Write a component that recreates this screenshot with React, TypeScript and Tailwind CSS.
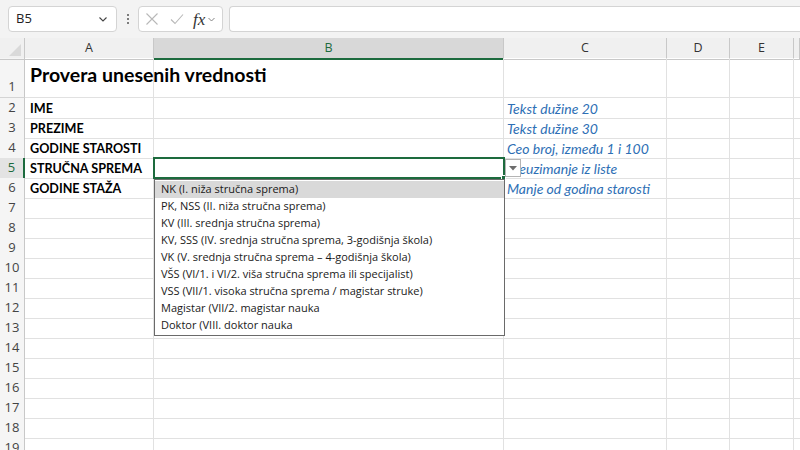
import React from "react";

const GRID = "grid grid-cols-[25px_129px_350px_163px_63px_64px_1fr]";

const labels: Record<number, string> = {
  2: "IME",
  3: "PREZIME",
  4: "GODINE STAROSTI",
  5: "STRUČNA SPREMA",
  6: "GODINE STAŽA",
};
const notes: Record<number, string> = {
  2: "Tekst dužine 20",
  3: "Tekst dužine 30",
  4: "Ceo broj, između 1 i 100",
  5: "Preuzimanje iz liste",
  6: "Manje od godina starosti",
};

const items = [
  "NK (I. niža stručna sprema)",
  "PK, NSS (II. niža stručna sprema)",
  "KV (III. srednja stručna sprema)",
  "KV, SSS (IV. srednja stručna sprema, 3-godišnja škola)",
  "VK (V. srednja stručna sprema – 4-godišnja škola)",
  "VŠS (VI/1. i VI/2. viša stručna sprema ili specijalist)",
  "VSS (VII/1. visoka stručna sprema / magistar struke)",
  "Magistar (VII/2. magistar nauka",
  "Doktor (VIII. doktor nauka",
];

function Toolbar() {
  return (
    <div className="flex h-[38px] items-start gap-0 bg-[#f3f3f3] pt-[6px] font-['Open_Sans',sans-serif]">
      <div className="ml-[8px] flex h-[26px] w-[109px] items-center justify-between rounded-[4px] border border-[#d4d4d4] bg-white pl-[7px] pr-[7px]">
        <span className="text-[13px] text-[#222]">B5</span>
        <svg width="12" height="12" viewBox="0 0 12 12">
          <path d="M2.5 4.5 L6 8 L9.5 4.5" fill="none" stroke="#444" strokeWidth="1.1" />
        </svg>
      </div>
      <div className="flex h-[26px] w-[21px] flex-col items-center justify-center gap-[2px]">
        <span className="h-[2px] w-[2px] rounded-full bg-[#555]" />
        <span className="h-[2px] w-[2px] rounded-full bg-[#555]" />
        <span className="h-[2px] w-[2px] rounded-full bg-[#555]" />
      </div>
      <div className="flex h-[26px] w-[85px] items-center rounded-[4px] border border-[#d4d4d4] bg-white pl-[6px]">
        <svg width="14" height="14" viewBox="0 0 14 14">
          <path d="M1.5 1.5 L12.5 12.5 M12.5 1.5 L1.5 12.5" stroke="#b8b8b8" strokeWidth="1.1" fill="none" />
        </svg>
        <svg className="ml-[11px]" width="14" height="14" viewBox="0 0 14 14">
          <path d="M1 7.5 L5 11.5 L13 2.5" stroke="#b8b8b8" strokeWidth="1.1" fill="none" />
        </svg>
        <span className="ml-[9px] font-['Liberation_Serif',serif] text-[17px] italic leading-none text-[#333]">fx</span>
        <svg className="ml-[2px]" width="9" height="9" viewBox="0 0 9 9">
          <path d="M1.5 3 L4.5 6 L7.5 3" fill="none" stroke="#777" strokeWidth="0.9" />
        </svg>
      </div>
      <div className="ml-[6px] h-[26px] flex-1 rounded-l-[4px] border border-r-0 border-[#d4d4d4] bg-white" />
    </div>
  );
}

function HeaderRow() {
  const letters = ["A", "B", "C", "D", "E", ""];
  return (
    <div className={`${GRID} h-[20px] bg-[#f0f0f0] font-['Open_Sans',sans-serif] text-[12.5px] text-[#333]`}>
      <div className="relative border-b border-r border-[#c8c8c8]">
        <svg className="absolute right-[3px] bottom-[3px]" width="12" height="12" viewBox="0 0 12 12">
          <path d="M12 0 L12 12 L0 12 Z" fill="#d9d9d9" />
        </svg>
      </div>
      {letters.map((l, i) =>
        l === "B" ? (
          <div key={i} className="flex items-center justify-center border-b-2 border-r border-b-[#1d6b3e] border-r-[#c8c8c8] bg-[#d8d8d8] pt-[1px] text-[#1d6b3e]">
            {l}
          </div>
        ) : (
          <div key={i} className="flex items-center justify-center border-b border-r border-[#c8c8c8]">
            {l}
          </div>
        )
      )}
    </div>
  );
}

function Row({ n }: { n: number }) {
  const tall = n === 1;
  const sel = n === 5;
  return (
    <div className={`${GRID} ${tall ? "h-[40px]" : "h-[20px]"}`}>
      <div
        className={`flex justify-center font-['Open_Sans',sans-serif] text-[13px] border-b border-[#d4d4d4] ${
          tall ? "items-end pb-[1px]" : "items-center"
        } ${
          sel ? "border-r-2 border-r-[#1d6b3e] bg-[#e3e3e3] text-[#1d6b3e]" : "border-r border-r-[#c8c8c8] bg-[#f5f5f5] text-[#444]"
        }`}
      >
        {n}
      </div>
      <div className="relative overflow-visible whitespace-nowrap border-b border-r border-[#e1e1e1] font-['Lato',sans-serif]">
        {tall ? (
          <span className="absolute left-[5px] top-[2px] text-[19.5px] font-bold text-black">Provera unesenih vrednosti</span>
        ) : labels[n] ? (
          <span className="absolute bottom-[-1px] left-[5px] text-[12.6px] font-bold text-black">{labels[n]}</span>
        ) : null}
      </div>
      <div className="border-b border-r border-[#e1e1e1]" />
      <div className="relative whitespace-nowrap border-b border-r border-[#e1e1e1] font-['Lato',sans-serif]">
        {notes[n] ? (
          <span className="absolute bottom-[-1px] left-[3px] text-[14px] italic text-[#2e6fb5]">{notes[n]}</span>
        ) : null}
      </div>
      <div className="border-b border-r border-[#e1e1e1]" />
      <div className="border-b border-r border-[#e1e1e1]" />
      <div className="border-b border-[#e1e1e1]" />
    </div>
  );
}

export default function App() {
  const rows = Array.from({ length: 19 }, (_, i) => i + 1);
  return (
    <div className="h-[450px] w-[800px] overflow-hidden bg-white">
      <Toolbar />
      <div className="relative">
        <HeaderRow />
        {rows.map((n) => (
          <Row key={n} n={n} />
        ))}
        {/* selected cell B5 */}
        <div className="pointer-events-none absolute left-[153px] top-[119px] h-[22px] w-[352px] border-2 border-[#1d6b3e]" />
        <div className="absolute left-[501px] top-[137px] h-[5px] w-[5px] border border-white bg-[#1d6b3e]" />
        {/* dropdown button */}
        <div className="absolute left-[505px] top-[121px] flex h-[18px] w-[16px] items-center justify-center border border-[#b4b4b4] bg-white">
          <svg width="8" height="5" viewBox="0 0 8 5">
            <path d="M0 0 L8 0 L4 4.5 Z" fill="#6d6d6d" />
          </svg>
        </div>
        {/* dropdown list */}
        <div className="absolute left-[154px] top-[141px] w-[351px] border border-[#6a6a6a] bg-white py-[1px] font-['Open_Sans',sans-serif] text-[11px] text-[#1a1a1a]">
          {items.map((it, i) => (
            <div key={i} className={`flex h-[17px] items-center whitespace-nowrap pl-[6px] ${i === 0 ? "bg-[#d9d9d9]" : ""}`}>
              {it}
            </div>
          ))}
        </div>
      </div>
    </div>
  );
}
